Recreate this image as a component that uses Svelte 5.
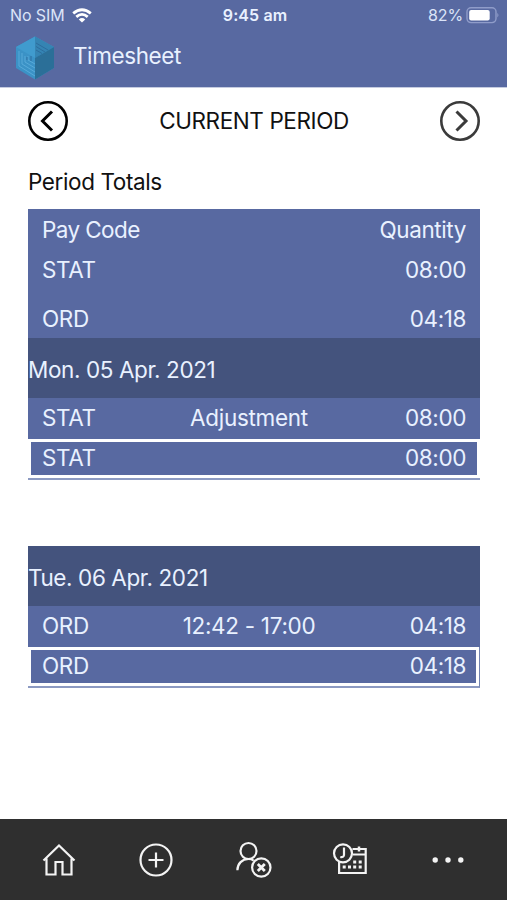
<script>
    const periodTotals = [
        { code: 'STAT', quantity: '08:00' },
        { code: 'ORD', quantity: '04:18' }
    ];

    const days = [
        {
            date: 'Mon. 05 Apr. 2021',
            entries: [{ code: 'STAT', detail: 'Adjustment', quantity: '08:00' }],
            total: { code: 'STAT', quantity: '08:00' }
        },
        {
            date: 'Tue. 06 Apr. 2021',
            entries: [{ code: 'ORD', detail: '12:42 - 17:00', quantity: '04:18' }],
            total: { code: 'ORD', quantity: '04:18' },
            edge: true
        }
    ];
</script>

<div class="screen">
    <header>
        <div class="status-bar">
            <div class="carrier">
                <span>No SIM</span>
                <svg width="20" height="15" viewBox="0 0 20 15" fill="none" stroke="#fff" stroke-width="2.8">
                    <path d="M1.2 5.4 Q10 -2 18.8 5.4" />
                    <path d="M4.3 8.9 Q10 3.8 15.7 8.9" />
                    <path d="M6.8 11.4 Q10 8.6 13.2 11.4 L10 14.6 Z" fill="#fff" stroke="none" />
                </svg>
            </div>
            <span class="clock">9:45 am</span>
            <div class="battery">
                <span>82%</span>
                <svg width="34" height="17" viewBox="0 0 34 17">
                    <rect x="1" y="0.8" width="29" height="14.8" rx="4" fill="none" stroke="#8f9cc9" stroke-width="1.4" />
                    <rect x="3.2" y="3" width="20.5" height="10.4" rx="2" fill="#fff" />
                    <path d="M31.3 5.8 Q33.6 8.2 31.3 10.5 Z" fill="#8f9cc9" />
                </svg>
            </div>
        </div>
        <div class="title-bar">
            <!-- Cube logo -->
            <svg width="40" height="44" viewBox="0 0 40 44">
                <path d="M20 0.5 L39 11 V32 L20 43.5 L1 32 V11 Z" fill="#3b92c6" />
                <path d="M20 0.5 L39 11 L20 22 Z" fill="#3584b3" />
                <path d="M39 11 V32 L20 43.5 V22 Z" fill="#2b6f98" />
                <path d="M20 0.5 L1 11 L20 22 Z" fill="#409bce" />
                <g fill="none" stroke="#5fb0dd" stroke-width="0.8">
                    <path d="M4 15 V30 L20 40 M7 17 V28 L20 36 M10 20 V26 L20 32 M13 20 V24 L20 28" />
                </g>
                <g fill="none" stroke="#2b6a9b" stroke-width="0.9">
                    <path d="M21 7 L33 14 M21 10.5 L30 16 M21 14 L27 17.5 M12 21 V24 M16 20 V25" />
                </g>
            </svg>
            <h1>Timesheet</h1>
        </div>
    </header>

    <main>
        <nav class="period-nav">
            <button class="previous" aria-label="Previous period">
                <svg width="42" height="42" viewBox="0 0 42 42" fill="none" stroke="currentColor" stroke-width="2.6">
                    <circle cx="21" cy="21" r="18.7" />
                    <path d="M25 11.5 L15.5 21 L25 30.5" stroke-width="3" />
                </svg>
            </button>
            <h2>CURRENT PERIOD</h2>
            <button class="next" aria-label="Next period">
                <svg width="42" height="42" viewBox="0 0 42 42" fill="none" stroke="currentColor" stroke-width="2.6">
                    <circle cx="21" cy="21" r="18.7" />
                    <path d="M17.5 11.5 L27 21 L17.5 30.5" stroke-width="3" />
                </svg>
            </button>
        </nav>

        <h3>Period Totals</h3>

        <section class="totals">
            <div class="row head">
                <span class="label">Pay Code</span>
                <span class="quantity">Quantity</span>
            </div>
            {#each periodTotals as item}
                <div class="row total-row">
                    <span class="code">{item.code}</span>
                    <span class="quantity">{item.quantity}</span>
                </div>
            {/each}
        </section>

        {#each days as day}
            <section class="day">
                <div class="date">{day.date}</div>
                {#each day.entries as entry}
                    <div class="row entry">
                        <span class="code">{entry.code}</span>
                        <span class="detail">{entry.detail}</span>
                        <span class="quantity">{entry.quantity}</span>
                    </div>
                {/each}
                <div class="day-total" class:edge={day.edge}>
                    <div class="row box">
                        <span class="code">{day.total.code}</span>
                        <span class="quantity">{day.total.quantity}</span>
                    </div>
                </div>
            </section>
        {/each}
    </main>

    <footer>
        <button aria-label="Home">
            <svg width="40" height="40" viewBox="0 0 40 40">
                <path d="M4.5 20.5 L20 5.5 L35.5 20.5 M7.5 18.5 V34.5 H16.5 V22 H23.5 V34.5 H32.5 V18.5" />
            </svg>
        </button>
        <button aria-label="Add">
            <svg width="40" height="40" viewBox="0 0 40 40">
                <circle cx="20" cy="20" r="15.5" />
                <path d="M20 12.5 V27.5 M12.5 20 H27.5" />
            </svg>
        </button>
        <button aria-label="Absence">
            <svg width="40" height="40" viewBox="0 0 40 40">
                <circle cx="14.5" cy="11" r="8" />
                <path d="M3.4 30.3 C3.4 23.5 8.2 19 14.5 19 Q17.5 19 19.7 20.6" />
                <circle cx="27.3" cy="27.5" r="9.2" />
                <path d="M23.8 24 L30.8 31 M30.8 24 L23.8 31" stroke-width="2.8" />
            </svg>
        </button>
        <button aria-label="Schedule">
            <svg width="40" height="40" viewBox="0 0 40 40">
                <circle cx="12" cy="13.3" r="9" />
                <path d="M13 7.5 V15 Q12.5 17.7 9.3 17" />
                <path d="M21.5 9 H34.7 V33 H8.1 V22 M21.5 14.5 H34.7" />
                <path d="M28 6.5 V11.5" stroke-width="2.5" />
                <path d="M22.2 22 h3 M27.7 22 h3 M11.7 27 h3 M17 27 h3 M22.2 27 h3 M27.7 27 h3" stroke-width="3" />
            </svg>
        </button>
        <button aria-label="More">
            <svg width="40" height="40" viewBox="0 0 40 40" class="dots">
                <circle cx="7.2" cy="20" r="2.7" />
                <circle cx="20" cy="20" r="2.7" />
                <circle cx="32.8" cy="20" r="2.7" />
            </svg>
        </button>
    </footer>
</div>

<style>
    :global(body) {
        background: #fff;
    }

    .screen {
        width: 507px;
        height: 900px;
        display: flex;
        flex-direction: column;
        overflow: hidden;
        font-family: Inter, "Liberation Sans", sans-serif;
        font-size: 22.5px;
        line-height: 28px;
        letter-spacing: -0.4px;
        color: #e9f1ff;
    }

    header {
        height: 87px;
        flex: none;
        background: #5869a1; /* Slate blue */
        border-bottom: 1px solid #c5cce0;
    }

    .status-bar {
        height: 30px;
        display: grid;
        grid-template-columns: 1fr auto 1fr;
        align-items: center;
        padding: 0 7px 0 10px;
        font-size: 16px;
        letter-spacing: -0.1px;
    }

    .carrier,
    .battery {
        display: flex;
        align-items: center;
        gap: 7px;
        color: #dbe4f8;
    }

    .battery {
        justify-content: flex-end;
        gap: 3px;
    }

    .clock {
        font-weight: 600;
        letter-spacing: 0.1px;
    }

    .title-bar {
        display: flex;
        align-items: center;
        gap: 18px;
        padding: 6px 0 0 15px;
    }

    h1,
    h2,
    h3 {
        margin: 0;
        font-size: 22.5px;
        font-weight: 400;
    }

    h1 {
        margin-top: -5px;
    }

    button {
        display: flex;
        padding: 0;
        border: none;
        background: none;
        cursor: pointer;
    }

    main {
        flex: 1;
        padding: 12px 27px 0 28px;
    }

    .period-nav {
        display: flex;
        align-items: center;
        justify-content: space-between;
        margin: 0 -1px;
        color: #111;
    }

    .previous {
        color: #000;
    }

    .next {
        color: #3b3b3b;
    }

    h3 {
        margin: 26px 0 13px;
        color: #111;
    }

    .row {
        display: grid;
        grid-template-columns: 104px 1fr 104px;
        align-items: center;
        padding: 0 14px;
    }

    .quantity {
        grid-column: 3;
        text-align: right;
    }

    .detail {
        text-align: center;
        margin-left: -10px;
        letter-spacing: -0.3px;
    }

    .totals {
        background: #5869a1;
    }

    .head {
        height: 41px;
    }

    .label {
        letter-spacing: -0.6px;
    }

    .total-row {
        height: 40px;
    }

    .total-row + .total-row {
        height: 48px;
        padding-top: 9px;
        box-sizing: border-box;
    }

    .day {
        margin-bottom: 66px;
    }

    .date {
        height: 60px;
        box-sizing: border-box;
        padding-top: 18px;
        background: #44537d; /* Darker band */
    }

    .entry {
        height: 41px;
        padding-bottom: 2px;
        box-sizing: border-box;
        background: #5869a1;
    }

    .day-total {
        padding: 3px;
        border-bottom: 2px solid #8c9ac2;
    }

    .day-total.edge {
        border-right: 1px solid #7182b0;
    }

    .day-total.edge .box {
        padding-right: 10px;
    }

    .box {
        height: 33px;
        padding: 0 11px 2px;
        box-sizing: border-box;
        background: #5869a1;
    }

    footer {
        height: 81px;
        flex: none;
        display: flex;
        align-items: center;
        justify-content: space-between;
        padding: 0 39px;
        box-sizing: border-box;
        background: #2f2f2f;
    }

    footer svg {
        fill: none;
        stroke: #f4f4f4;
        stroke-width: 2.2;
    }

    footer .dots {
        fill: #f4f4f4;
        stroke: none;
    }
</style>
